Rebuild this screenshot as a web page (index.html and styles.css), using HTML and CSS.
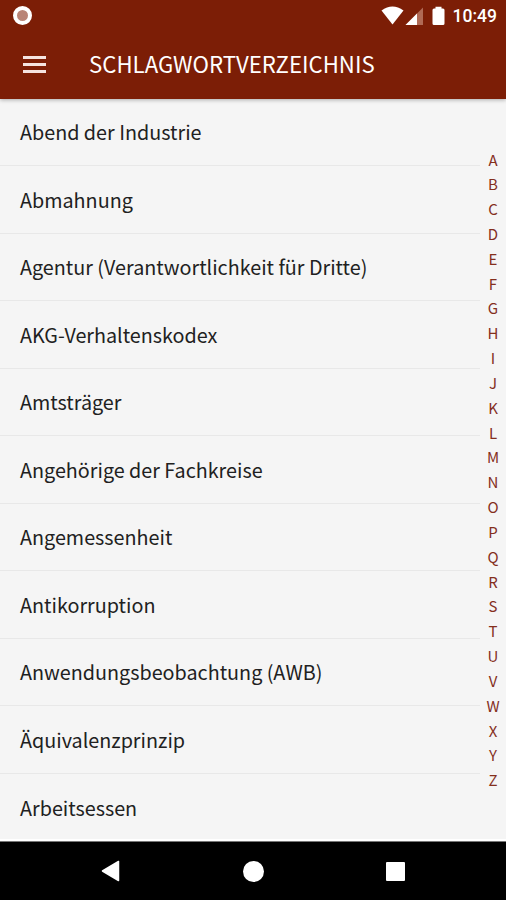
FILE: index.html
```
<!DOCTYPE html>
<html lang="de">
<head>
    <meta charset="UTF-8">
    <meta name="viewport" content="width=device-width, initial-scale=1.0">
    <title>Schlagwortverzeichnis</title>
    <link rel="stylesheet" href="styles.css">
</head>
<body>
    <header>
        <div class="status-bar">
            <span class="recording"></span>
            <svg class="status-icons" width="68" height="20" viewBox="0 0 68 20">
                <path d="M0.5 4.5Q11.5 -3.5 22.5 4.5L11.5 18.5Z" fill="#fff"/>
                <path d="M24.5 19L42 1.5V19Z" fill="#b06a55"/>
                <path d="M24.5 19L36 7.5V19Z" fill="#fff"/>
                <path d="M53 2.500h1.500V0.800h6v1.700H62q1.500 0 1.500 1.500V17.500q0 1.500-1.500 1.500H53q-1.500 0-1.500-1.500V4q0-1.500 1.500-1.500Z" fill="#fff"/>
            </svg>
            <span class="time">10:49</span>
        </div>
        <div class="toolbar">
            <button class="menu-btn" aria-label="Menü">
                <span></span>
                <span></span>
                <span></span>
            </button>
            <h1>SCHLAGWORTVERZEICHNIS</h1>
        </div>
    </header>
    <main>
        <ul class="keyword-list">
            <li>Abend der Industrie</li>
            <li>Abmahnung</li>
            <li>Agentur (Verantwortlichkeit für Dritte)</li>
            <li>AKG-Verhaltenskodex</li>
            <li>Amtsträger</li>
            <li>Angehörige der Fachkreise</li>
            <li>Angemessenheit</li>
            <li>Antikorruption</li>
            <li>Anwendungsbeobachtung (AWB)</li>
            <li>Äquivalenzprinzip</li>
            <li>Arbeitsessen</li>
        </ul>
        <ul class="letter-index">
            <li>A</li>
            <li>B</li>
            <li>C</li>
            <li>D</li>
            <li>E</li>
            <li>F</li>
            <li>G</li>
            <li>H</li>
            <li>I</li>
            <li>J</li>
            <li>K</li>
            <li>L</li>
            <li>M</li>
            <li>N</li>
            <li>O</li>
            <li>P</li>
            <li>Q</li>
            <li>R</li>
            <li>S</li>
            <li>T</li>
            <li>U</li>
            <li>V</li>
            <li>W</li>
            <li>X</li>
            <li>Y</li>
            <li>Z</li>
        </ul>
    </main>
    <nav>
        <svg width="20" height="22" viewBox="0 0 20 22">
            <path d="M17.500 1.500V20.500L1.500 11Z" fill="#fff" stroke="#fff" stroke-width="1.500" stroke-linejoin="round"/>
        </svg>
        <span class="home"></span>
        <span class="recents"></span>
    </nav>
</body>
</html>
```
FILE: styles.css
```
* {
    box-sizing: border-box;
}

body {
    font-family: "Noto Sans CJK SC", "Open Sans", sans-serif;
    background: #f5f5f5;
    color: #212121;
    display: flex;
    flex-direction: column;
    height: 900px;
    margin: 0;
    overflow: hidden;
}

header {
    height: 98.5px;
    flex-shrink: 0;
    background: #7c1e06;
    color: #fff;
    box-shadow: 0 1px 4px rgba(0, 0, 0, 0.3);
    z-index: 1;
}

.status-bar {
    display: flex;
    align-items: center;
    height: 32px;
    padding: 0 9px 0 13px;
}

.recording {
    width: 19px;
    height: 19px;
    margin-top: -2px;
    border: 4px solid #fff;
    border-radius: 50%;
    background: #b98476;
}

.status-icons {
    margin: -1px 0 0 auto;
}

.time {
    margin-left: 4px;
    font-family: Roboto, sans-serif;
    font-size: 17.5px;
    font-weight: 500;
}

.toolbar {
    display: flex;
    align-items: center;
    height: 64px;
    padding-left: 23px;
}

.menu-btn {
    display: flex;
    flex-direction: column;
    gap: 4px;
    width: 23px;
    padding: 0;
    border: none;
    background: none;
}

.menu-btn span {
    height: 3px;
    background: #f5e3df;
}

h1 {
    margin: 0 0 2px 43px;
    font-size: 22.2px;
    font-weight: 400;
    line-height: 30px;
}

main {
    display: flex;
    flex: 1;
    min-height: 0;
    overflow: hidden;
    border-bottom: 2px solid #fff;
}

ul {
    list-style: none;
    margin: 0;
    padding: 0;
}

.keyword-list {
    width: 480px;
}

.keyword-list li {
    display: flex;
    align-items: center;
    height: 67.5px;
    padding-left: 20px;
    border-bottom: 1px solid #e8e8e8;
    font-size: 19.75px;
}

.keyword-list li:last-child {
    border-bottom: none;
}

.letter-index {
    width: 26px;
    padding-top: 49px;
    color: #842f1d;
    font-size: 15px;
    text-align: center;
}

.letter-index li {
    height: 24.84px;
    line-height: 24.84px;
}

nav {
    display: flex;
    align-items: center;
    height: 59px;
    flex-shrink: 0;
    padding-left: 101px;
    background: #000;
    border-top: 1px solid #777;
}

.home {
    width: 21px;
    height: 21px;
    margin-left: 122px;
    border-radius: 50%;
    background: #fff;
}

.recents {
    width: 19px;
    height: 19px;
    margin-left: 122px;
    border-radius: 1px;
    background: #fff;
}
```
